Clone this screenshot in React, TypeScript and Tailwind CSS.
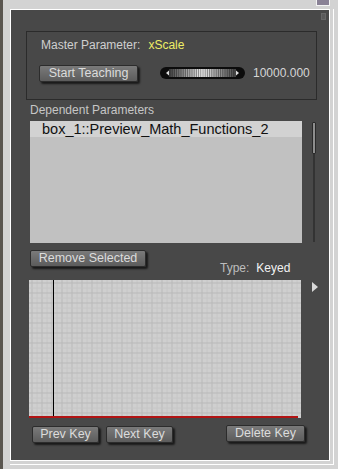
const font = "font-['Liberation_Sans',Arial,sans-serif]";

function Btn({ label, w }: { label: string; w: string }) {
  return (
    <button
      className={`${w} h-[17px] flex items-center justify-center rounded-[2px] border border-[#2c2c2c] bg-[linear-gradient(#7a7a7a,#5c5c5c)] text-[12.5px] leading-none text-[#dcdcdc] shadow-[2px_2px_2px_rgba(0,0,0,0.65)] ${font}`}
    >
      {label}
    </button>
  );
}

function Dial() {
  const ribs = Array.from({ length: 30 }, (_, i) => i);
  return (
    <svg width="85" height="14" viewBox="0 0 85 14" className="block">
      <defs>
        <linearGradient id="rib" x1="0" x2="1" y1="0" y2="0">
          <stop offset="0" stopColor="#444" />
          <stop offset="0.5" stopColor="#f4f4f4" />
          <stop offset="1" stopColor="#444" />
        </linearGradient>
      </defs>
      <rect x="0" y="1" width="85" height="12" rx="6" fill="#0c0c0c" />
      <rect x="9" y="3" width="67" height="8" fill="url(#rib)" />
      {ribs.map((i) => (
        <line key={i} x1={10 + i * 2.2} x2={10 + i * 2.2} y1="3" y2="11" stroke="#111" strokeOpacity="0.55" strokeWidth="0.8" />
      ))}
      <path d="M6 7 L9 4.5 L9 9.5 Z" fill="#ddd" />
      <path d="M79 7 L76 4.5 L76 9.5 Z" fill="#ddd" />
    </svg>
  );
}

function Graph() {
  const w = 272;
  const h = 138;
  const xs = Array.from({ length: Math.ceil(w / 5) }, (_, i) => i * 5 + 3);
  const ys = Array.from({ length: Math.ceil(h / 5) }, (_, i) => i * 5 + 3);
  return (
    <svg width={w} height={h} viewBox={`0 0 ${w} ${h}`} className="block">
      <rect width={w} height={h} fill="#cfcfcf" />
      {xs.map((x, i) => (
        <line key={`v${i}`} x1={x} x2={x} y1="0" y2={h} stroke={i % 2 ? "#c6c6c6" : "#b9b9b9"} strokeWidth="1" />
      ))}
      {ys.map((y, i) => (
        <line key={`h${i}`} x1="0" x2={w} y1={y} y2={y} stroke={i % 2 ? "#c6c6c6" : "#b9b9b9"} strokeWidth="1" />
      ))}
      <line x1="24.5" x2="24.5" y1="0" y2={h - 1} stroke="#000" strokeWidth="1" />
      <line x1="0" x2={w - 3} y1={h - 1} y2={h - 1} stroke="#b31414" strokeWidth="2" />
    </svg>
  );
}

export default function App() {
  return (
    <div className={`flex w-[338px] h-[469px] overflow-hidden bg-[#d3d3d3] ${font}`}>
      <div className="w-[3px] bg-[#5a5650]" />
      <div className="relative flex-1 flex flex-col pt-[9px] pl-[7px] pr-[4px] pb-[4px]">
        <div className="absolute right-[8px] top-0 w-[14px] h-[6px] border border-t-0 border-[#f4f4f4] bg-[#8a8296]" />
        <div className="flex-1 flex flex-col border-r border-b border-white pr-[3px] pb-[3px]">
          <div className="flex-1 flex flex-col border border-white">
            <div className="relative flex-1 flex flex-col bg-[#484848]">
              <div className="absolute right-[3px] top-[3px] w-[5px] h-[7px] border border-[#666] bg-[#5a5a5a]" />

              <div className="mt-[21px] ml-[15px] mr-[12px] h-[69px] border border-[#2b2b2b] flex flex-col pl-[12px]">
                <div className="mt-[6px] flex items-center gap-[8px] text-[12px] leading-[14px]">
                  <span className="ml-[2px] text-[#cfcfcf]">Master Parameter:</span>
                  <span className="text-[#eeee66]">xScale</span>
                </div>
                <div className="mt-[12px] flex items-center">
                  <Btn label="Start Teaching" w="w-[99px]" />
                  <div className="ml-[22px]">
                    <Dial />
                  </div>
                  <span className="ml-[8px] text-[12px] text-[#d6d6d6]">10000.000</span>
                </div>
              </div>

              <div className="mt-[3px] ml-[19px] text-[12px] leading-[14px] text-[#c6c6c6]">Dependent Parameters</div>

              <div className="mt-[4px] ml-[19px] flex">
                <div className="w-[272px] h-[122px] bg-[#c1c1c1]">
                  <div className="h-[16px] bg-[#d2d2d2] pl-[12px] text-[14.5px] leading-[16px] text-[#111]">
                    box_1::Preview_Math_Functions_2
                  </div>
                </div>
                <div className="ml-[10px] mt-[1px] relative w-[4px] h-[120px]">
                  <div className="absolute left-[1px] top-0 w-[2px] h-[120px] bg-[#333]" />
                  <div className="absolute left-0 top-0 w-[4px] h-[32px] rounded-[1px] border border-[#2a2a2a] bg-[#8e8e8e]" />
                </div>
              </div>

              <div className="mt-[7px] ml-[19px] flex items-end">
                <Btn label="Remove Selected" w="w-[116px]" />
                <div className="ml-[74px] mb-[-8px] flex gap-[7px] text-[12px] leading-[14px]">
                  <span className="text-[#bdbdbd]">Type:</span>
                  <span className="text-[#f2f2f2]">Keyed</span>
                </div>
              </div>

              <div className="mt-[13px] ml-[18px] flex">
                <Graph />
                <svg width="8" height="12" viewBox="0 0 8 12" className="ml-[10px] mt-[1px]">
                  <path d="M1 1 L7 6 L1 11 Z" fill="#d8d8d8" />
                </svg>
              </div>

              <div className="mt-[8px] ml-[21px] flex items-start">
                <Btn label="Prev Key" w="w-[67px]" />
                <div className="ml-[7px]">
                  <Btn label="Next Key" w="w-[67px]" />
                </div>
                <div className="ml-[53px] mt-[-1px]">
                  <Btn label="Delete Key" w="w-[79px]" />
                </div>
              </div>
            </div>
          </div>
        </div>
      </div>
    </div>
  );
}
